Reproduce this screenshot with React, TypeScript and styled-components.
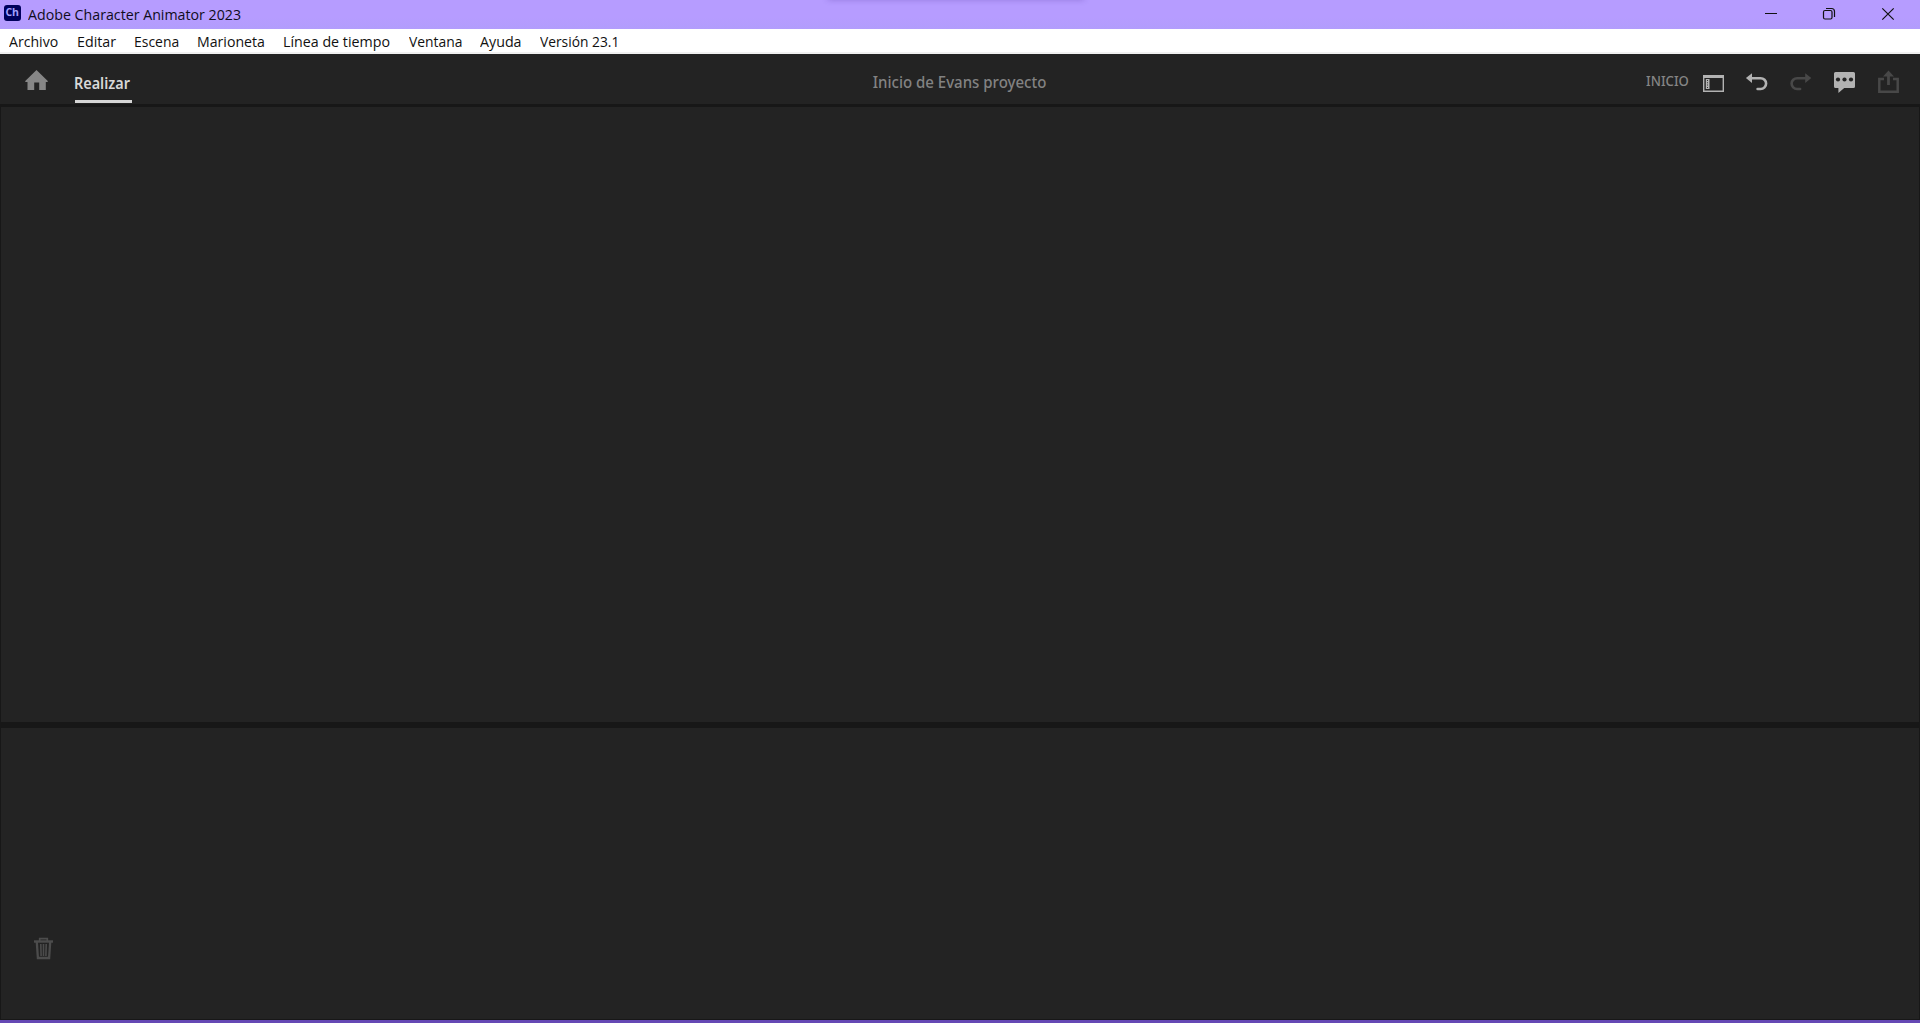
import React from "react";
import styled, { createGlobalStyle } from "styled-components";

const GlobalStyle = createGlobalStyle`
  * { box-sizing: border-box; }
  body { margin: 0; background: #232323; overflow: hidden; }
`;

const Window = styled.div`
  display: flex;
  flex-direction: column;
  width: 100vw;
  height: 100vh;
  overflow: hidden;
  background: #171717;
  border-bottom: 3px solid #6548b4;
  font-family: "Open Sans", "Noto Sans", sans-serif;
`;

const TitleBar = styled.header`
  position: relative;
  flex: none;
  display: flex;
  height: 29px;
  padding-left: 3.5px;
  background: linear-gradient(#b69cff 60%, #b29dfc);
  color: #100c1c;
`;

const TopShadow = styled.div`
  position: absolute;
  top: -5px;
  left: 828px;
  width: 256px;
  height: 4px;
  box-shadow: 0 0 6px rgba(60, 30, 130, 0.4);
`;

const AppBadge = styled.div`
  width: 17px;
  height: 16px;
  margin-top: 5px;
  border-radius: 3px;
  background: #00005b;
  color: #a3a0ff;
  font: 700 10.5px/15px "Open Sans", sans-serif;
  letter-spacing: -0.4px;
  text-align: center;
`;

const Title = styled.h1`
  margin: 0 auto 0 7.5px;
  font-size: 15px;
  font-weight: 400;
  line-height: 29px;
  white-space: nowrap;
  transform: scaleX(0.947);
  transform-origin: left;
`;

const Controls = styled.div`
  display: flex;
  svg { display: block; width: 58.5px; height: 29px; }
`;

const MenuBar = styled.nav`
  flex: none;
  display: flex;
  height: 25px;
  padding-left: 9px;
  background: #fff;
  border-bottom: 2px solid #f0f0f0;
`;

const MenuItem = styled.span<{ $width: number; $stretch: number }>`
  flex: none;
  width: ${(p) => p.$width}px;
  color: #111;
  font-size: 15px;
  line-height: 25px;
  white-space: nowrap;
  transform: scaleX(${(p) => p.$stretch});
  transform-origin: left;
`;

const Toolbar = styled.div`
  flex: none;
  display: grid;
  grid-template-columns: 1fr auto 1fr;
  height: 50px;
  background: #232323;
`;

const ToolbarStart = styled.div`
  display: flex;
  padding-left: 25px;
  svg { margin-top: 16px; }
`;

const Tab = styled.div`
  width: 57px;
  height: 49px;
  margin-left: 27px;
  border-bottom: 3px solid #d6d6d6;
`;

const TabLabel = styled.span`
  display: block;
  margin-left: -1px;
  color: #d8d8d8;
  font: 600 16px/58px "Noto Sans", sans-serif;
  white-space: nowrap;
  transform: scaleX(0.9);
  transform-origin: left;
`;

const ProjectName = styled.div`
  color: #828282;
  font: 500 16px/56px "Noto Sans", sans-serif;
  white-space: nowrap;
  transform: scaleX(0.938);
`;

const ToolbarEnd = styled.div`
  display: flex;
  justify-content: flex-end;
  padding-right: 18px;
`;

const Workspace = styled.span`
  margin-right: 11px;
  color: #858585;
  font: 500 15px/53px "Noto Sans", sans-serif;
  transform: scaleX(0.875);
  transform-origin: right;
`;

const ToolIcons = styled.div`
  display: flex;
  gap: 18px;
  padding-top: 15px;
  svg { display: block; width: 26px; height: 26px; }
`;

const Panel = styled.section<{ $grow?: boolean }>`
  flex: ${(p) => (p.$grow ? "1" : "0 0 291px")};
  margin: ${(p) => (p.$grow ? "3px 1px 6px" : "0 1px 1px")};
  background: #232323;
`;

const TrashButton = styled.div`
  padding: 209px 0 0 32px;
  svg { display: block; }
`;

const menus: [string, number, number][] = [
  ["Archivo", 68, 0.94],
  ["Editar", 57, 0.95],
  ["Escena", 63, 0.93],
  ["Marioneta", 86, 0.942],
  ["Línea de tiempo", 126, 0.95],
  ["Ventana", 71, 0.925],
  ["Ayuda", 60, 0.95],
  ["Versión 23.1", 90, 0.92],
];

const HomeIcon = () => (
  <svg width="23" height="21" viewBox="0 0 23 21" fill="#868686">
    <path d="M11.5 0 23 11.2 22.3 12H20.8V20H14.2V12.5H9.2V20H2.5V12H.7L0 11.2Z" />
  </svg>
);

const WindowControls = () => (
  <Controls>
    <svg viewBox="0 0 58.5 29" stroke="#111" fill="none"><path d="M20 13.5H32" /></svg>
    <svg viewBox="0 0 58.5 29" stroke="#111" fill="none" strokeWidth="1.2">
      <rect x="20.5" y="10.5" width="8.5" height="8.5" rx="1.5" />
      <path d="M23 8.5h5.500a3 3 0 0 1 3 3v5.500" />
    </svg>
    <svg viewBox="0 0 58.5 29" stroke="#111" fill="none" strokeWidth="1.2">
      <path d="M20.3 8.3 31.7 19.7M31.7 8.3 20.3 19.7" />
    </svg>
  </Controls>
);

const PanelIcon = () => (
  <svg viewBox="0 0 26 26" fill="#b2b2b2">
    <path fillRule="evenodd" d="M3 6h21v17H3ZM4.4 9v12.600h18.200V9Z" />
    <path d="M5.800 10h3.700v10H5.800Z" />
    <path d="M7 11h1v1H7zM7 13.3h1v1H7zM7 15.6h1v1H7zM7 17.9h1v1H7z" fill="#303030" />
  </svg>
);

const UndoIcon = () => (
  <svg viewBox="0 0 26 26">
    <path d="M7 9.2h9.500a5.500 5.400 0 0 1 0 10.800h-3" transform="translate(.1)" fill="none" stroke="#b2b2b2" strokeWidth="2.600" strokeLinecap="round" strokeLinejoin="round" />
    <path d="M1.900 9.100 8 4.200v9.800Z" fill="#b2b2b2" />
  </svg>
);

const RedoIcon = () => (
  <svg viewBox="0 0 26 26">
    <path d="M18 9.200H9.100a5.500 5.400 0 0 0 0 10.800h3" fill="none" stroke="#484848" strokeWidth="2.600" strokeLinecap="round" />
    <path d="M23.300 9.100 17.200 4.200v9.800Z" fill="#484848" />
  </svg>
);

const CommentIcon = () => (
  <svg viewBox="0 0 26 26" fill="#b2b2b2">
    <path d="M3.500 3h18q1.500 0 1.500 1.500v13q0 1.500-1.500 1.500H12.200l-5.800 5V19H3.500q-1.500 0-1.500-1.500v-13Q2 3 3.500 3Z" />
    <g fill="#232323">
      <circle cx="6" cy="10.5" r="2.1" />
      <circle cx="12.500" cy="10.5" r="2.1" />
      <circle cx="19" cy="10.5" r="2.1" />
    </g>
  </svg>
);

const ShareIcon = () => (
  <svg viewBox="0 0 26 26">
    <path d="M8 10H3.300v12.700h18.400V10H17" fill="none" stroke="#484848" strokeWidth="2.5" />
    <path d="M12.500 1.500 18 7.500h-4.100v8.500h-2.800V7.500H7Z" fill="#484848" />
  </svg>
);

const TrashIcon = () => (
  <svg width="21" height="23" viewBox="0 0 21 23" fill="none" stroke="#4c4c4c">
    <path d="M1 4.500h19" strokeWidth="2.400" />
    <path d="M6.700 4V1.700h7.600V4" strokeWidth="1.700" />
    <path d="M3.800 5l1.100 16h11.200L17.200 5" strokeWidth="2.300" />
    <path d="M7.800 7l.3 12M10.500 7v12M13.200 7l-.3 12" strokeWidth="1.600" />
  </svg>
);

export default function App() {
  return (
    <>
      <GlobalStyle />
      <Window>
        <TitleBar>
          <TopShadow />
          <AppBadge>Ch</AppBadge>
          <Title>Adobe Character Animator 2023</Title>
          <WindowControls />
        </TitleBar>
        <MenuBar>
          {menus.map(([label, width, stretch]) => (
            <MenuItem key={label} $width={width} $stretch={stretch}>{label}</MenuItem>
          ))}
        </MenuBar>
        <Toolbar>
          <ToolbarStart>
            <HomeIcon />
            <Tab><TabLabel>Realizar</TabLabel></Tab>
          </ToolbarStart>
          <ProjectName>Inicio de Evans proyecto</ProjectName>
          <ToolbarEnd>
            <Workspace>INICIO</Workspace>
            <ToolIcons>
              <PanelIcon />
              <UndoIcon />
              <RedoIcon />
              <CommentIcon />
              <ShareIcon />
            </ToolIcons>
          </ToolbarEnd>
        </Toolbar>
        <Panel $grow />
        <Panel>
          <TrashButton><TrashIcon /></TrashButton>
        </Panel>
      </Window>
    </>
  );
}
